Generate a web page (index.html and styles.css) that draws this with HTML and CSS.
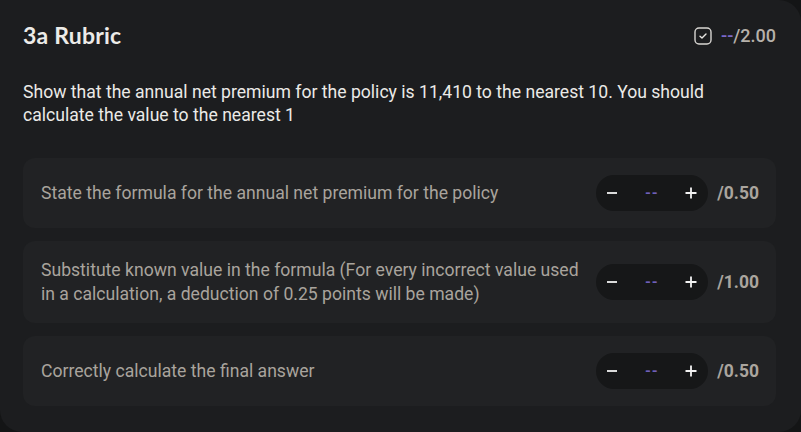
FILE: index.html
```html
<!DOCTYPE html>
<html>
<head>
<meta charset="utf-8">
<link rel="stylesheet" href="styles.css">
</head>
<body>
<div class="card">
  <div class="header">
    <h1 class="title">3a Rubric</h1>
    <div class="total">
      <svg class="check" width="18" height="18" viewBox="0 0 18 18">
        <rect x="1" y="1" width="16" height="16" rx="4" fill="none" stroke="#d8d6d2" stroke-width="1.4"/>
        <path d="M6 9.2 L8 11 L12 7" fill="none" stroke="#e8e6e2" stroke-width="1.4" stroke-linecap="round" stroke-linejoin="round"/>
      </svg>
      <span class="dash">--</span><span class="max">/2.00</span>
    </div>
  </div>
  <p class="desc">Show that the annual net premium for the policy is 11,410 to the nearest 10. You should calculate the value to the nearest 1</p>
  <div class="rows">
    <div class="row">
      <div class="label">State the formula for the annual net premium for the policy</div>
      <div class="score">
        <div class="stepper">
          <svg class="btn" width="12" height="12" viewBox="0 0 12 12"><path d="M1 6 H11" stroke="#f2f2f2" stroke-width="1.8"/></svg>
          <span class="val">--</span>
          <svg class="btn" width="12" height="12" viewBox="0 0 12 12"><path d="M0.5 6 H11.5 M6 0.5 V11.5" stroke="#f2f2f2" stroke-width="1.8"/></svg>
        </div>
        <span class="out">/0.50</span>
      </div>
    </div>
    <div class="row">
      <div class="label">Substitute known value in the formula (For every incorrect value used in a calculation, a deduction of 0.25 points will be made)</div>
      <div class="score">
        <div class="stepper">
          <svg class="btn" width="12" height="12" viewBox="0 0 12 12"><path d="M1 6 H11" stroke="#f2f2f2" stroke-width="1.8"/></svg>
          <span class="val">--</span>
          <svg class="btn" width="12" height="12" viewBox="0 0 12 12"><path d="M0.5 6 H11.5 M6 0.5 V11.5" stroke="#f2f2f2" stroke-width="1.8"/></svg>
        </div>
        <span class="out">/1.00</span>
      </div>
    </div>
    <div class="row">
      <div class="label">Correctly calculate the final answer</div>
      <div class="score">
        <div class="stepper">
          <svg class="btn" width="12" height="12" viewBox="0 0 12 12"><path d="M1 6 H11" stroke="#f2f2f2" stroke-width="1.8"/></svg>
          <span class="val">--</span>
          <svg class="btn" width="12" height="12" viewBox="0 0 12 12"><path d="M0.5 6 H11.5 M6 0.5 V11.5" stroke="#f2f2f2" stroke-width="1.8"/></svg>
        </div>
        <span class="out">/0.50</span>
      </div>
    </div>
  </div>
</div>
</body>
</html>
```
FILE: styles.css
```css
html, body {
  margin: 0;
  padding: 0;
  background: #141516;
}
body {
  width: 801px;
  height: 432px;
  overflow: hidden;
  font-family: Roboto, "Liberation Sans", sans-serif;
}
.card {
  box-sizing: border-box;
  width: 801px;
  height: 432px;
  background: #1c1d1f;
  border-radius: 0 22px 22px 22px;
  padding: 21px 25px 0 23px;
}
.header {
  display: flex;
  justify-content: space-between;
  align-items: center;
  height: 28px;
}
.title {
  margin: 0;
  font-family: Lato, sans-serif;
  font-weight: 700;
  font-size: 23px;
  color: #ecebe8;
  letter-spacing: 0.2px;
}
.total {
  display: flex;
  align-items: center;
  font-size: 18px;
  font-weight: 500;
  padding-top: 1px;
}
.check {
  margin-right: 9px;
}
.dash {
  color: #7a68c8;
}
.max {
  color: #b6b1aa;
}
.desc {
  margin: 32px 0 0 0;
  font-size: 17.6px;
  line-height: 23px;
  color: #ebeae7;
}
.rows {
  margin-top: 31px;
  display: flex;
  flex-direction: column;
  gap: 13px;
}
.row {
  display: flex;
  align-items: center;
  justify-content: space-between;
  background: #212224;
  border-radius: 12px;
  padding: 17px 17px 17px 18px;
  min-height: 36px;
}
.label {
  flex: 1;
  font-size: 17.6px;
  line-height: 24px;
  color: #a9a49d;
  padding-right: 14px;
}
.score {
  display: flex;
  align-items: center;
  gap: 9px;
}
.stepper {
  display: flex;
  align-items: center;
  justify-content: space-between;
  width: 112px;
  height: 36px;
  box-sizing: border-box;
  padding: 0 11px 0 10px;
  background: #161718;
  border-radius: 18px;
}
.btn {
  display: block;
}
.val {
  color: #6f5fb8;
  font-size: 15px;
  font-weight: 700;
  letter-spacing: 1px;
}
.out {
  color: #aaa59e;
  font-size: 17.5px;
  font-weight: 700;
}
```
